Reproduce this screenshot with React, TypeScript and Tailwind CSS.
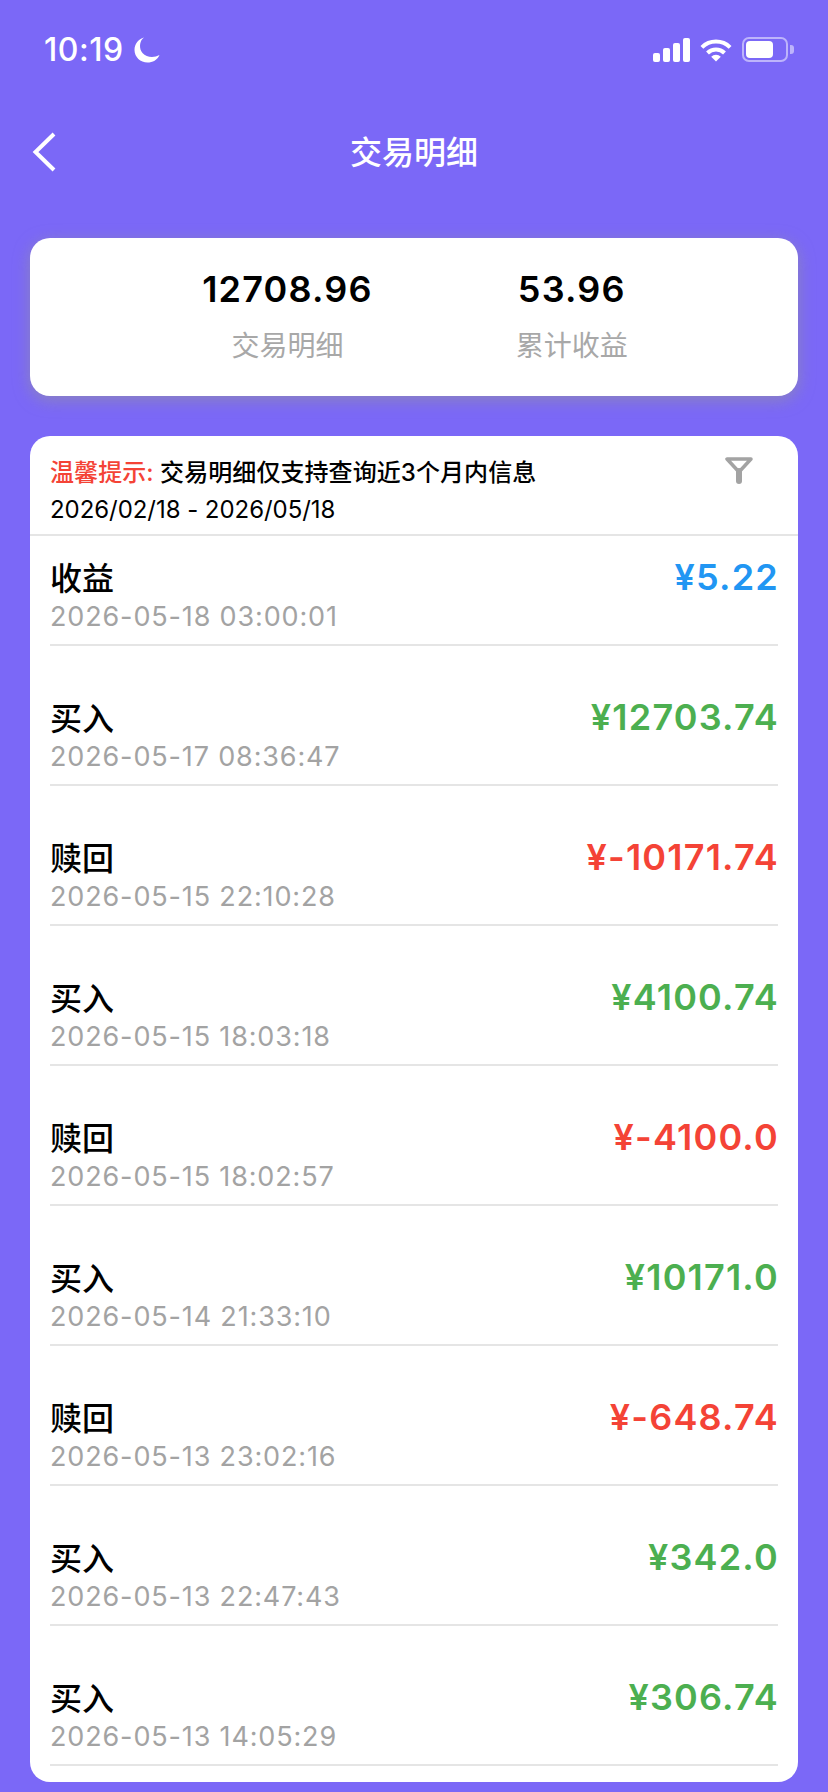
const rows = [
  { t: "收益", d: "2026-05-18 03:00:01", a: "¥5.22", c: "text-[#2196f3]" },
  { t: "买入", d: "2026-05-17 08:36:47", a: "¥12703.74", c: "text-[#4caf50]" },
  { t: "赎回", d: "2026-05-15 22:10:28", a: "¥-10171.74", c: "text-[#f44336]" },
  { t: "买入", d: "2026-05-15 18:03:18", a: "¥4100.74", c: "text-[#4caf50]" },
  { t: "赎回", d: "2026-05-15 18:02:57", a: "¥-4100.0", c: "text-[#f44336]" },
  { t: "买入", d: "2026-05-14 21:33:10", a: "¥10171.0", c: "text-[#4caf50]" },
  { t: "赎回", d: "2026-05-13 23:02:16", a: "¥-648.74", c: "text-[#f44336]" },
  { t: "买入", d: "2026-05-13 22:47:43", a: "¥342.0", c: "text-[#4caf50]" },
  { t: "买入", d: "2026-05-13 14:05:29", a: "¥306.74", c: "text-[#4caf50]" },
];

function Row({ r, first }: { r: (typeof rows)[number]; first: boolean }) {
  return (
    <div className={`mx-[20px] flex justify-between border-b-2 border-[#e5e5e5] ${first ? "h-[110px] pt-[21px]" : "h-[140px] pt-[51px]"}`}>
      <div>
        <div className="text-[32px] leading-[44px] font-medium text-black">{r.t}</div>
        <div className="text-[27px] leading-[32px] tracking-[0.85px] text-[#a3a3a3]">{r.d}</div>
      </div>
      <div className={`mr-[-1px] mt-[-1px] text-[36px] leading-[42px] font-semibold tracking-[1.2px] ${r.c}`}>{r.a}</div>
    </div>
  );
}

export default function App() {
  return (
    <div className="h-[1792px] w-[828px] overflow-hidden bg-[#7b68f7] font-['Inter','Noto_Sans_CJK_SC',sans-serif]">
      <div className="flex h-[100px] items-start justify-between pl-[44px] pr-[34px] pt-[32px] text-white">
        <div className="flex items-center gap-[10px]">
          <span className="text-[32px] leading-[36px] font-medium tracking-[0.5px]">10:19</span>
          <svg width="26" height="26" viewBox="0 0 26 26" fill="#fff">
            <path d="M10 0.5 C5 4 5 12 8.5 16 C12.5 20.5 20 21 25.5 18 C23.5 23 18.500 25.500 13.500 25.500 C6.500 25.500 0.500 20 0.500 13 C0.500 7 4.500 2 10 0.500Z" />
          </svg>
        </div>
        <div className="flex items-center pt-[5px]">
          <svg width="37" height="24" viewBox="0 0 37 24" fill="#fff">
            <rect x="0" y="15" width="7" height="9" rx="2" />
            <rect x="10" y="10" width="7" height="14" rx="2" />
            <rect x="20" y="5" width="7" height="19" rx="2" />
            <rect x="30" y="0" width="7" height="24" rx="2" />
          </svg>
          <svg className="ml-[10px]" width="32" height="24" viewBox="0 0 32 24" fill="none" stroke="#fff" strokeWidth="4">
            <path d="M1.900 9.400 A20 20 0 0 1 30.100 9.400" />
            <path d="M7.500 15 A12 12 0 0 1 24.500 15" />
            <path d="M16 23.500 L11.200 18.700 A6.800 6.800 0 0 1 20.800 18.700 Z" fill="#fff" stroke="none" />
          </svg>
          <div className="ml-[10px] flex items-center gap-[2px]">
            <div className="flex h-[25px] w-[46px] items-center rounded-[7px] border-2 border-white/50 p-[2px]">
              <div className="h-full w-[27px] rounded-[4px] bg-white" />
            </div>
            <div className="h-[9px] w-[4px] rounded-r-[3px] bg-white/50" />
          </div>
        </div>
      </div>

      <div className="relative flex h-[104px] items-center justify-center pt-[2px]">
        <svg className="absolute left-[32px] top-[32px]" width="24" height="40" viewBox="0 0 24 40" fill="none" stroke="#fff" strokeWidth="4">
          <path d="M22 2 L3.500 20 L22 38" />
        </svg>
        <span className="text-[32px] font-medium text-white">交易明细</span>
      </div>

      <div className="mx-[30px] mt-[34px] flex h-[158px] justify-center gap-[143px] rounded-[20px] bg-white pl-[2px] pt-[29px] shadow-[0_4px_16px_rgba(150,150,150,0.6)]">
        <div className="flex flex-col items-center">
          <div className="text-[36px] leading-[44px] font-semibold tracking-[1.2px] text-black">12708.96</div>
          <div className="mt-[15px] text-[28px] leading-[40px] text-[#a8a8a8]">交易明细</div>
        </div>
        <div className="flex flex-col items-center">
          <div className="text-[36px] leading-[44px] font-semibold tracking-[1.2px] text-black">53.96</div>
          <div className="mt-[15px] text-[28px] leading-[40px] text-[#a8a8a8]">累计收益</div>
        </div>
      </div>

      <div className="mx-[30px] mt-[40px] h-[1346px] overflow-hidden rounded-[20px] bg-white">
        <div className="relative h-[100px] border-b-2 border-[#e5e5e5] pl-[20px] pt-[19px]">
          <div className="text-[24px] leading-[36px] font-medium tracking-[0.07px] text-black">
            <span className="text-[#f44336]">温馨提示:</span> 交易明细仅支持查询近3个月内信息
          </div>
          <div className="mt-[1px] text-[24px] leading-[36px] tracking-[-0.05px] text-black">2026/02/18 - 2026/05/18</div>
          <svg className="absolute right-[45px] top-[20px]" width="28" height="28" viewBox="0 0 28 28" fill="none" stroke="#a3a3a3">
            <path d="M2 3 H26 L14 16 Z" strokeWidth="3.5" strokeLinejoin="round" />
            <path d="M14 15 V25" strokeWidth="6" strokeLinecap="round" />
          </svg>
        </div>
        {rows.map((r, i) => (
          <Row key={i} r={r} first={i === 0} />
        ))}
      </div>
    </div>
  );
}
